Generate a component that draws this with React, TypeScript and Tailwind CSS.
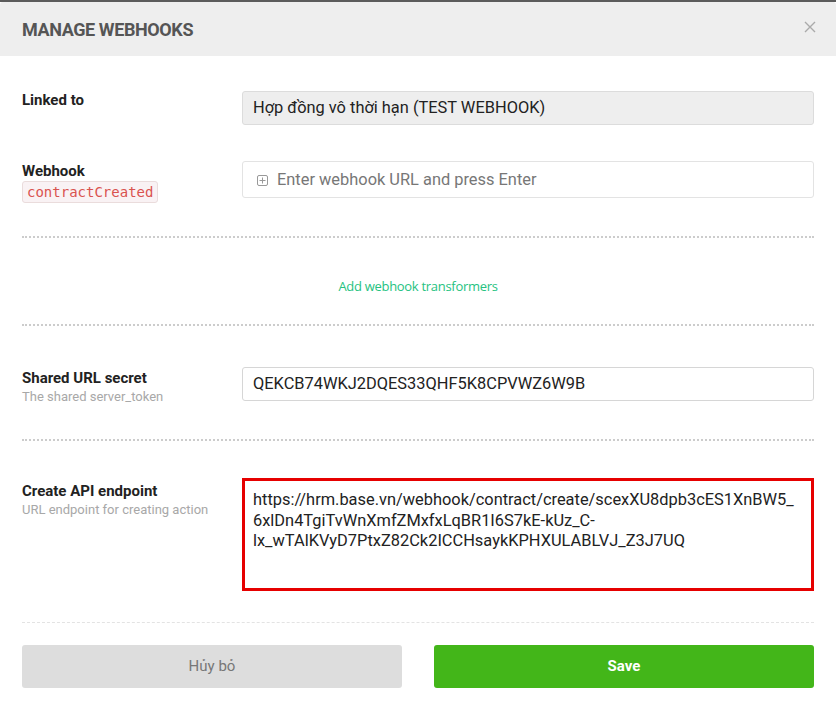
import React from "react";

export default function App() {
  return (
    <div className="w-[836px] h-[717px] bg-white font-['Roboto',sans-serif] overflow-hidden">
      <div className="h-[2px] bg-[#5b5b5b]" />
      <div className="h-[54px] bg-[#eeeeee] flex items-center justify-between pl-[22px] pr-[20px] rounded-t-[3px]">
        <div className="text-[18px] font-bold text-[#555555] tracking-[-0.4px]">MANAGE WEBHOOKS</div>
        <svg width="12" height="12" viewBox="0 0 12 12" className="mb-[4px]">
          <path d="M1 1 L11 11 M11 1 L1 11" stroke="#aaaaaa" strokeWidth="1.4" />
        </svg>
      </div>

      <div className="px-[22px]">
        {/* Linked to */}
        <div className="mt-[35px] flex items-start">
          <div className="w-[220px] text-[15px] font-bold text-[#222] leading-[18px]">Linked to</div>
          <div className="flex-1 h-[34px] bg-[#eeeeee] border border-[#dcdcdc] rounded-[3px] flex items-center px-[10px] text-[16.4px] text-[#222]">
            Hợp đồng vô thời hạn (TEST WEBHOOK)
          </div>
        </div>

        {/* Webhook */}
        <div className="mt-[36px] flex items-start h-[37px]">
          <div className="w-[220px]">
            <div className="text-[15px] font-bold text-[#222] leading-[18px] pt-[1px]">Webhook</div>
            <div className="inline-block mt-[1px] px-[4px] h-[22px] leading-[21px] bg-[#f9f2f4] border border-[#eadcdc] rounded-[3px] font-['DejaVu_Sans_Mono',monospace] text-[14px] text-[#d9534f]">
              contractCreated
            </div>
          </div>
          <div className="flex-1 h-[37px] bg-white border border-[#e3e3e3] rounded-[3px] flex items-center px-[14px] pt-[2px] text-[16.4px] text-[#777]">
            <svg width="11" height="11" viewBox="0 0 11 11" className="mr-[9px]">
              <rect x="0.5" y="0.5" width="10" height="10" rx="1.5" fill="none" stroke="#999" strokeWidth="1" />
              <path d="M5.5 2.5 V8.5 M2.5 5.5 H8.5" stroke="#999" strokeWidth="1" />
            </svg>
            Enter webhook URL and press Enter
          </div>
        </div>

        <div className="mt-[38px] border-t-2 border-dotted border-[#cccccc]" />
        <div className="h-[86px] pt-[36px] text-center">
          <span className="text-[13px] leading-[20px] text-[#26c281] font-['Open_Sans',sans-serif] tracking-[-0.3px]">Add webhook transformers</span>
        </div>
        <div className="border-t-2 border-dotted border-[#cccccc]" />

        {/* Shared URL secret */}
        <div className="mt-[41px] flex items-start h-[34px]">
          <div className="w-[220px] pt-[2px]">
            <div className="text-[15px] font-bold text-[#222] leading-[18px]">Shared URL secret</div>
            <div className="text-[13px] text-[#a8a8a8] leading-[20px]">The shared server_token</div>
          </div>
          <div className="flex-1 h-[34px] bg-white border border-[#d6d6d6] rounded-[3px] flex items-center px-[10px] text-[16.4px] text-[#222]">
            QEKCB74WKJ2DQES33QHF5K8CPVWZ6W9B
          </div>
        </div>

        <div className="mt-[38px] border-t-2 border-dotted border-[#cccccc]" />

        {/* Create API endpoint */}
        <div className="mt-[37px] flex items-start">
          <div className="w-[220px] pt-[4px]">
            <div className="text-[15px] font-bold text-[#222] leading-[18px]">Create API endpoint</div>
            <div className="text-[13px] text-[#a8a8a8] leading-[20px]">URL endpoint for creating action</div>
          </div>
          <div className="flex-1 h-[113px] bg-white border-[3px] border-[#e60000] px-[8px] pt-[9px] text-[16.4px] leading-[20.5px] text-[#222]">
            <div>https://hrm.base.vn/webhook/contract/create/scexXU8dpb3cES1XnBW5_</div>
            <div>6xlDn4TgiTvWnXmfZMxfxLqBR1I6S7kE-kUz_C-</div>
            <div>lx_wTAlKVyD7PtxZ82Ck2ICCHsaykKPHXULABLVJ_Z3J7UQ</div>
          </div>
        </div>

        <div className="mt-[31px] border-t border-dashed border-[#e3e3e3]" />

        {/* Buttons */}
        <div className="mt-[22px] flex gap-[32px]">
          <div className="flex-1 h-[43px] bg-[#dddddd] rounded-[3px] flex items-center justify-center text-[15px] text-[#777]">
            Hủy bỏ
          </div>
          <div className="flex-1 h-[43px] bg-[#43b619] rounded-[3px] flex items-center justify-center text-[15px] font-bold text-white">
            Save
          </div>
        </div>
      </div>
    </div>
  );
}
